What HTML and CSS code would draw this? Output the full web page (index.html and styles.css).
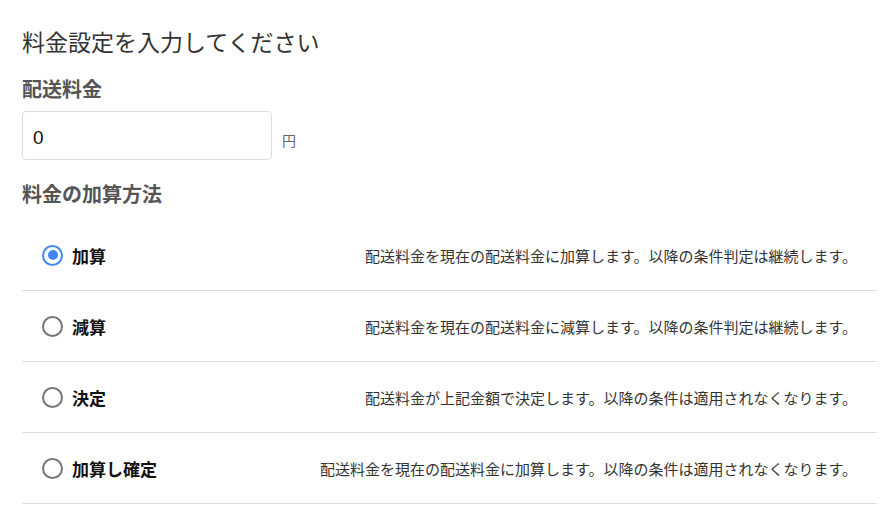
FILE: index.html
```html
<!DOCTYPE html>
<html lang="ja">
<head>
<meta charset="utf-8">
<link rel="stylesheet" href="styles.css">
</head>
<body>
<div class="page">
  <h1 class="title">料金設定を入力してください</h1>
  <h2 class="section">配送料金</h2>
  <div class="price-row">
    <div class="input">0</div>
    <span class="unit">円</span>
  </div>
  <h2 class="section method">料金の加算方法</h2>
  <ul class="options">
    <li class="option">
      <span class="radio checked"></span>
      <span class="label">加算</span>
      <span class="desc">配送料金を現在の配送料金に加算します。以降の条件判定は継続します。</span>
    </li>
    <li class="option">
      <span class="radio"></span>
      <span class="label">減算</span>
      <span class="desc">配送料金を現在の配送料金に減算します。以降の条件判定は継続します。</span>
    </li>
    <li class="option">
      <span class="radio"></span>
      <span class="label">決定</span>
      <span class="desc">配送料金が上記金額で決定します。以降の条件は適用されなくなります。</span>
    </li>
    <li class="option">
      <span class="radio"></span>
      <span class="label">加算し確定</span>
      <span class="desc">配送料金を現在の配送料金に加算します。以降の条件は適用されなくなります。</span>
    </li>
  </ul>
</div>
</body>
</html>
```
FILE: styles.css
```css
* { box-sizing: border-box; }
html, body { margin: 0; padding: 0; background: #fff; }
body {
  font-family: "Noto Sans CJK JP", "Noto Sans", sans-serif;
  color: #333;
}
.page { padding: 27px 10px 0 22px; }
.title {
  margin: 0;
  font-size: 23px;
  font-weight: 400;
  line-height: 28px;
  color: #333;
}
.section {
  margin: 21px 0 0;
  font-size: 20px;
  font-weight: 700;
  line-height: 26px;
  color: #555;
}
.price-row {
  display: flex;
  align-items: flex-end;
  margin-top: 9px;
}
.input {
  width: 250px;
  height: 49px;
  border: 1px solid #ddd;
  border-radius: 4px;
  padding: 2px 10px 0;
  font-family: "Liberation Sans", Arial, sans-serif;
  font-size: 19px;
  line-height: 47px;
  color: #111;
}
.unit {
  margin: 0 0 11px 10px;
  font-size: 14px;
  color: #666;
  line-height: 18px;
}
.section.method { margin-top: 21px; }
.options {
  list-style: none;
  margin: 13px 0 0;
  padding: 0;
}
.option {
  display: flex;
  align-items: center;
  height: 71px;
  border-bottom: 1px solid #ddd;
  padding: 0 20px;
}
.radio {
  width: 21px;
  height: 21px;
  border: 2px solid #757575;
  border-radius: 50%;
  flex: none;
  position: relative;
}
.radio.checked { border-color: #4285f4; }
.radio.checked::after {
  content: "";
  position: absolute;
  left: 3.5px; top: 3.5px;
  width: 10px; height: 10px;
  border-radius: 50%;
  background: #4285f4;
}
.label {
  margin-left: 9px;
  font-size: 17px;
  font-weight: 700;
  color: #111;
}
.desc {
  margin-left: auto;
  font-size: 15px;
  color: #333;
}
```
